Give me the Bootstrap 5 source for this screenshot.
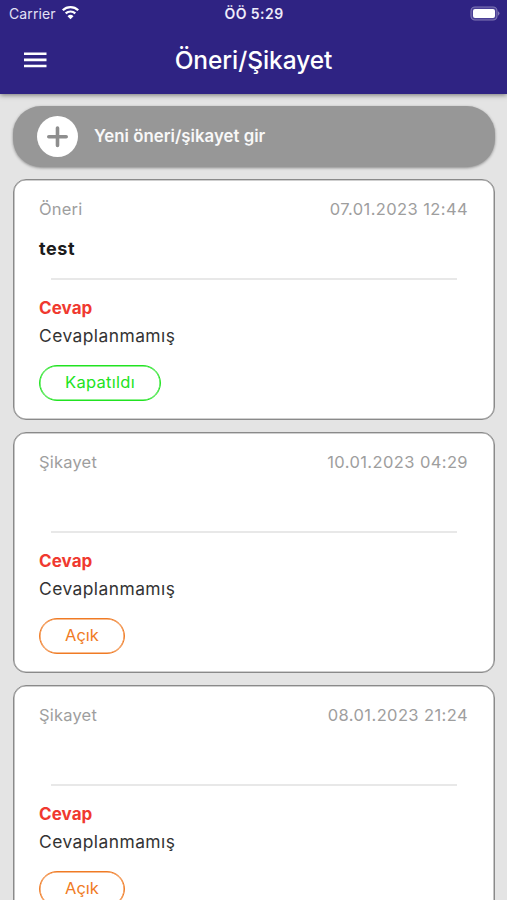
<!DOCTYPE html>
<html lang="tr">
<head>
<meta charset="utf-8">
<meta name="viewport" content="width=device-width, initial-scale=1">
<title>Öneri/Şikayet</title>
<link rel="stylesheet" href="https://cdn.jsdelivr.net/npm/bootstrap@5.3.0/dist/css/bootstrap.min.css">
<style>
body{background:#e4e4e4;font-family:Inter,"Liberation Sans",sans-serif;height:900px;overflow:hidden}
svg{display:block}
.app-head{background:#2f2383;height:94px;box-shadow:0 1px 5px rgba(0,0,0,.5)}
.status{height:28px;padding:0 7px 0 9px;font-size:14px;line-height:28px}
.status svg{margin-top:-2px}
.carrier{letter-spacing:.12px;color:#e3e0f5}
.clock{font-size:14px;letter-spacing:.45px;color:#eeecfa;padding-right:1px}
.title-bar{height:64px;padding-left:24px;padding-right:24px}
.title-bar h1{font-size:24.5px;line-height:30px;letter-spacing:-.06px}
.menu-btn{width:23px}
.menu-gap{width:23px}
.feed{padding:12px 12px 0 13px}
.new-entry{height:61px;border-radius:28px;background:#979797;padding-left:24px;box-shadow:0 1px 3px rgba(0,0,0,.4);font-size:16.8px;letter-spacing:.02px;gap:16px;color:#f8f8f8}
.entry{height:241px;border:1px solid #8a8a8a;box-shadow:inset 0 0 0 .6px #a0a0a0;border-radius:13px;padding:17px 25px 0 25px;margin-top:12px;color:#333;background:#fff}
.meta{font-size:16.5px;line-height:24px;color:#9e9e9e;letter-spacing:.2px}
.meta time{letter-spacing:.4px;margin-right:1px}
.subject{font-size:18px;line-height:24px;height:24px;margin-top:16px;color:#1c1c1c;letter-spacing:.6px}
.rule{height:2px;background:#e8e8e8;margin:17px 12px 14px 12px}
.reply-title{font-size:17px;line-height:28px;color:#f0392f;letter-spacing:.08px}
.reply-text{font-size:17.4px;line-height:27px;letter-spacing:.45px}
.state{height:36px;border:1px solid;box-shadow:inset 0 0 0 .5px currentColor;padding:0 25px 2px 25px;font-size:16.5px;letter-spacing:.3px;margin-top:16px}
.closed{color:#21e321}
.open{color:#f07b24;letter-spacing:0}
</style>
<script src="https://cdn.jsdelivr.net/npm/bootstrap@5.3.0/dist/js/bootstrap.bundle.min.js"></script>
</head>
<body>
<header class="app-head text-white position-relative">
  <div class="status row g-0 align-items-center">
    <div class="col d-flex align-items-center"><span class="carrier">Carrier</span>
      <svg class="ms-1" width="20" height="16" viewBox="0 0 20 16" fill="none" stroke="#fff"><path d="M2.8 5.2a11 11 0 0 1 15.4 0" stroke-width="2.3"/><path d="M5.7 8.4a7 7 0 0 1 9.6 0" stroke-width="2.2"/><path d="M10.5 14.2l-3-3a4.4 4.4 0 0 1 6 0z" fill="#fff" stroke="none"/></svg>
    </div>
    <div class="col-auto clock fw-semibold">ÖÖ 5:29</div>
    <div class="col d-flex justify-content-end">
      <svg width="31" height="15" viewBox="0 0 31 15"><rect x="2" y="1" width="26" height="13" rx="4" fill="#4a3f96" stroke="#8179b5" stroke-width="1.1"/><rect x="4" y="3" width="22" height="9" rx="2" fill="#fff"/><path d="M29 5.3q3 2.2 0 4.4z" fill="#8179b5"/></svg>
    </div>
  </div>
  <nav class="title-bar d-flex align-items-center justify-content-between">
    <div class="menu-btn" role="button" aria-label="Menü"><svg width="23" height="16" viewBox="0 0 23 16" fill="#fff"><path d="M0 .5h22.5v2.6H0zM0 6.6h22.5v2.6H0zM0 12.7h22.5v2.6H0z"/></svg></div>
    <h1 class="m-0 fw-medium">Öneri/Şikayet</h1>
    <div class="menu-gap"></div>
  </nav>
</header>
<main class="feed">
  <div class="new-entry d-flex align-items-center fw-semibold" role="button">
    <svg width="41" height="41" viewBox="0 0 41 41"><circle cx="20.5" cy="20.5" r="20.5" fill="#fff"/><path d="M20.5 12v17.4M11.8 20.7h17.4" stroke="#8e8e8e" stroke-width="3.6" stroke-linecap="round"/></svg>
    <span>Yeni öneri/şikayet gir</span>
  </div>
  <article class="entry">
    <div class="meta d-flex justify-content-between"><span>Öneri</span><time>07.01.2023 12:44</time></div>
    <div class="subject fw-bold">test</div>
    <div class="rule"></div>
    <div class="reply-title fw-bold">Cevap</div>
    <div class="reply-text">Cevaplanmamış</div>
    <div class="state closed rounded-pill d-inline-flex align-items-center">Kapatıldı</div>
  </article>
  <article class="entry">
    <div class="meta d-flex justify-content-between"><span>Şikayet</span><time>10.01.2023 04:29</time></div>
    <div class="subject fw-bold"></div>
    <div class="rule"></div>
    <div class="reply-title fw-bold">Cevap</div>
    <div class="reply-text">Cevaplanmamış</div>
    <div class="state open rounded-pill d-inline-flex align-items-center">Açık</div>
  </article>
  <article class="entry">
    <div class="meta d-flex justify-content-between"><span>Şikayet</span><time>08.01.2023 21:24</time></div>
    <div class="subject fw-bold"></div>
    <div class="rule"></div>
    <div class="reply-title fw-bold">Cevap</div>
    <div class="reply-text">Cevaplanmamış</div>
    <div class="state open rounded-pill d-inline-flex align-items-center">Açık</div>
  </article>
</main>
</body>
</html>
